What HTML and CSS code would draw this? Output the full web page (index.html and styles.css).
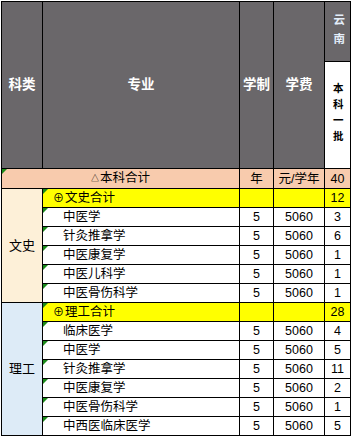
FILE: index.html
```html
<!DOCTYPE html>
<html lang="zh-CN">
<head>
<meta charset="utf-8">
<title>云南 本科一批 招生计划</title>
<link rel="stylesheet" href="styles.css">
</head>
<body>
<table class="sheet">
  <colgroup>
    <col class="c1"><col class="c2"><col class="c3"><col class="c4"><col class="c5">
  </colgroup>
  <thead>
    <tr class="h1">
      <th rowspan="2">科类</th>
      <th rowspan="2">专业</th>
      <th rowspan="2">学制</th>
      <th rowspan="2">学费</th>
      <th class="prov"><span class="vert">云南</span></th>
    </tr>
    <tr class="h2">
      <th class="batch"><span class="vert">本科一批</span></th>
    </tr>
  </thead>
  <tbody>
    <tr class="all">
      <td colspan="2" class="flag"><span class="tri">△</span>本科合计</td>
      <td>年</td><td>元/学年</td><td>40</td>
    </tr>
    <tr class="sum">
      <td rowspan="6" class="cat wen">文史</td>
      <td class="name flag"><span class="plus">⊕</span>文史合计</td>
      <td></td><td></td><td class="num">12</td>
    </tr>
    <tr><td class="name flag item">中医学</td><td class="num">5</td><td class="num">5060</td><td class="num">3</td></tr>
    <tr><td class="name flag item">针灸推拿学</td><td class="num">5</td><td class="num">5060</td><td class="num">6</td></tr>
    <tr><td class="name flag item">中医康复学</td><td class="num">5</td><td class="num">5060</td><td class="num">1</td></tr>
    <tr><td class="name flag item">中医儿科学</td><td class="num">5</td><td class="num">5060</td><td class="num">1</td></tr>
    <tr><td class="name flag item">中医骨伤科学</td><td class="num">5</td><td class="num">5060</td><td class="num">1</td></tr>
    <tr class="sum">
      <td rowspan="7" class="cat li">理工</td>
      <td class="name flag"><span class="plus">⊕</span>理工合计</td>
      <td></td><td></td><td class="num">28</td>
    </tr>
    <tr><td class="name flag item">临床医学</td><td class="num">5</td><td class="num">5060</td><td class="num">4</td></tr>
    <tr><td class="name flag item">中医学</td><td class="num">5</td><td class="num">5060</td><td class="num">5</td></tr>
    <tr><td class="name flag item">针灸推拿学</td><td class="num">5</td><td class="num">5060</td><td class="num">11</td></tr>
    <tr><td class="name flag item">中医康复学</td><td class="num">5</td><td class="num">5060</td><td class="num">2</td></tr>
    <tr><td class="name flag item">中医骨伤科学</td><td class="num">5</td><td class="num">5060</td><td class="num">1</td></tr>
    <tr><td class="name flag item">中西医临床医学</td><td class="num">5</td><td class="num">5060</td><td class="num">5</td></tr>
  </tbody>
</table>
</body>
</html>
```

FILE: styles.css
```css
html, body {
  margin: 0;
  padding: 0;
  background: #ffffff;
}

body {
  font-family: "Liberation Sans", "Noto Sans CJK SC", sans-serif;
  font-size: 12.5px;
  color: #000;
}

.sheet {
  margin: 1px 0 0 1px;
  border-collapse: separate;
  border-spacing: 0;
  table-layout: fixed;
  width: 350px;
  border-left: 1px solid #000;
  border-top: 1px solid #000;
}

.c1 { width: 41px; }
.c2 { width: 197px; }
.c3 { width: 34px; }
.c4 { width: 51px; }
.c5 { width: 26px; }

.sheet th,
.sheet td {
  padding: 0;
  border-right: 1px solid #000;
  border-bottom: 1px solid #000;
  text-align: center;
  vertical-align: middle;
  white-space: nowrap;
  overflow: hidden;
  line-height: 18px;
}

.sheet td {
  position: relative;
}

.sheet th {
  background: #6a676a;
  color: #ffffff;
  font-weight: bold;
  font-size: 13.5px;
}

.h1 { height: 60px; }
.h2 { height: 107px; }

.vert {
  writing-mode: vertical-lr;
  display: inline-block;
  line-height: 1;
}

.sheet th.prov {
  color: #e4eefa;
  font-size: 11.5px;
  letter-spacing: 7px;
  padding-top: 7px;
}

.sheet th.batch {
  background: #ffffff;
  color: #000;
  font-size: 10.5px;
  letter-spacing: 5.5px;
  padding-top: 5px;
}

.sheet tbody tr {
  height: 19px;
}

.all td {
  background: #f8cbad;
}

.tri {
  font-size: 8px;
  vertical-align: 1px;
  margin-right: 1px;
}

.sum td {
  background: #ffff00;
}

.sheet td.cat {
  font-size: 13px;
}

.sheet td.wen { background: #fdf0d8; }
.sheet td.li { background: #ddebf7; }

.sheet td.name {
  text-align: left;
  padding-left: 10px;
}

.sheet td.item {
  padding-left: 20px;
}

.plus {
  font-size: 11px;
  margin-right: 1px;
}

.flag::before {
  content: "";
  position: absolute;
  left: 0;
  top: 0;
  width: 0;
  height: 0;
  border-top: 5px solid #1a8a1a;
  border-right: 5px solid transparent;
}
```
